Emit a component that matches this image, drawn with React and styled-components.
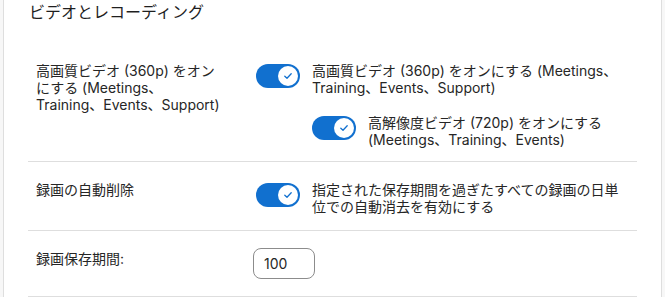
import React from "react";
import styled, { createGlobalStyle } from "styled-components";

const GlobalStyle = createGlobalStyle`
  html, body {
    margin: 0;
    padding: 0;
    background: #f7f7f7;
  }
  body {
    font-family: Inter, "Noto Sans CJK JP", sans-serif;
    color: #262626;
  }
`;

const Panel = styled.section`
  margin: 0 3px;
  min-height: 297px;
  background: #ffffff;
  border-left: 1px solid #dedede;
  border-right: 1px solid #dedede;
  padding: 2px 24px 0 24px;
  box-sizing: border-box;
`;

const Title = styled.h2`
  margin: 0 0 38px 1px;
  font-size: 16px;
  line-height: 20px;
  font-weight: 400;
  color: #1f1f1f;
`;

const Row = styled.div`
  display: flex;
  align-items: flex-start;
  padding: ${({ $first }) => ($first ? "0 8px 13px" : "17px 8px 15px")};
  border-bottom: 1px solid #dedede;
`;

const Label = styled.div`
  width: 187px;
  margin-right: 30px;
  margin-top: 2px;
  font-size: 14px;
  line-height: 17px;
  flex-shrink: 0;
`;

const Controls = styled.div`
  flex: 1;
  display: flex;
  flex-direction: column;
  gap: 16px;
`;

const ToggleLine = styled.div`
  display: flex;
  align-items: flex-start;
  gap: 12px;
  margin-left: ${({ $nested }) => ($nested ? "59px" : "3px")};
`;

const Track = styled.span`
  position: relative;
  flex-shrink: 0;
  width: 44px;
  height: 24px;
  margin-top: 4px;
  border-radius: 12px;
  background: #1170cf;
`;

const Knob = styled.span`
  position: absolute;
  top: 2px;
  right: 2px;
  width: 20px;
  height: 20px;
  border-radius: 50%;
  background: #ffffff;
  display: flex;
  align-items: center;
  justify-content: center;
`;

const ToggleText = styled.div`
  margin-top: 2px;
  font-size: 14px;
  line-height: 17px;
`;

const NumberBox = styled.div`
  width: 62px;
  height: 31px;
  box-sizing: border-box;
  border: 1px solid #8c8c8c;
  border-radius: 8px;
  padding: 0 10px;
  display: flex;
  align-items: center;
  font-size: 14px;
  margin-bottom: 2px;
`;

const Toggle = () => (
  <Track>
    <Knob>
      <svg width="12" height="12" viewBox="0 0 12 12">
        <path
          d="M2.8 6.2 L5 8.2 L9.2 3.8"
          fill="none"
          stroke="#1170cf"
          strokeWidth="1.3"
          strokeLinecap="round"
          strokeLinejoin="round"
        />
      </svg>
    </Knob>
  </Track>
);

const App = () => {
  return (
    <>
      <GlobalStyle />
      <Panel>
        <Title>ビデオとレコーディング</Title>
        <Row $first>
          <Label>高画質ビデオ (360p) をオンにする (Meetings、Training、Events、Support)</Label>
          <Controls>
            <ToggleLine>
              <Toggle />
              <ToggleText>
                高画質ビデオ (360p) をオンにする (Meetings、Training、Events、Support)
              </ToggleText>
            </ToggleLine>
            <ToggleLine $nested>
              <Toggle />
              <ToggleText>
                高解像度ビデオ (720p) をオンにする (Meetings、Training、Events)
              </ToggleText>
            </ToggleLine>
          </Controls>
        </Row>
        <Row>
          <Label>録画の自動削除</Label>
          <Controls>
            <ToggleLine>
              <Toggle />
              <ToggleText>
                指定された保存期間を過ぎたすべての録画の日単位での自動消去を有効にする
              </ToggleText>
            </ToggleLine>
          </Controls>
        </Row>
        <Row>
          <Label>録画保存期間:</Label>
          <Controls>
            <NumberBox>100</NumberBox>
          </Controls>
        </Row>
      </Panel>
    </>
  );
};

export default App;
